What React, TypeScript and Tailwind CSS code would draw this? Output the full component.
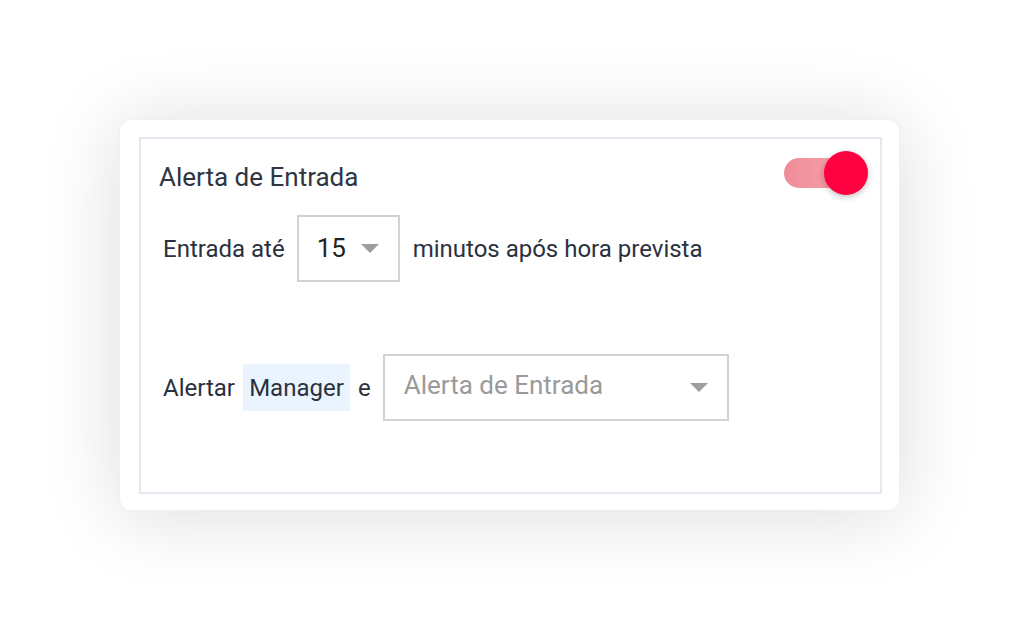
import React, { useState } from 'react';

const Caret: React.FC = () => (
    <svg width="18" height="9" viewBox="0 0 18 9" className="shrink-0">
        <path d="M0 0 L18 0 L9 9 Z" fill="#9e9e9e" />
    </svg>
);

const App: React.FC = () => {
    const [enabled, setEnabled] = useState(true);

    return (
        <div
            className="w-full h-[631px] bg-white pt-[119px] pl-[119px]"
            style={{ fontFamily: 'Roboto, "Noto Sans", sans-serif' }}
        >
            {/* Card */}
            <div className="w-[781px] h-[392px] bg-white rounded-[12px] border border-[#f0f0f0] shadow-[0_4px_80px_rgba(0,0,0,0.14)] pt-[17px] pl-[19px]">
                <div className="w-[743px] h-[357px] border-2 border-[#e4e9f0] pt-[12px] pr-[12px] flex flex-col">
                    {/* Header */}
                    <div className="flex items-start justify-between">
                        <h2 className="pl-[18px] mt-[13px] text-[26px] text-[#2f3643] leading-none">Alerta de Entrada</h2>
                        <button
                            onClick={() => setEnabled(!enabled)}
                            className="relative w-[84px] h-[44px] flex items-center"
                        >
                            <span className="w-[66px] h-[30px] rounded-full bg-gradient-to-r from-[#ee8c98] to-[#f8a3ab]"></span>
                            <span
                                className={`absolute top-0 w-[44px] h-[44px] rounded-full bg-[#ff0041] shadow-[0_2px_6px_rgba(0,0,0,0.25)] ${enabled ? 'right-0' : 'left-0'}`}
                            ></span>
                        </button>
                    </div>

                    {/* Row 1 */}
                    <div className="mt-[20px] flex items-center pl-[22px] text-[24px] text-[#2a313e]">
                        <span>Entrada até</span>
                        <div className="ml-[12px] w-[103px] h-[67px] border-2 border-[#d2d2d2] flex items-center pl-[18px] pr-[19px] justify-between">
                            <span className="text-[26px] text-[#222]">15</span>
                            <Caret />
                        </div>
                        <span className="ml-[13px]">minutos após hora prevista</span>
                    </div>

                    {/* Row 2 */}
                    <div className="mt-[72px] flex items-center pl-[22px] text-[24px] text-[#2a313e]">
                        <span>Alertar</span>
                        <span className="ml-[8px] h-[47px] w-[107px] flex items-center justify-center bg-[#eaf4ff]">Manager</span>
                        <span className="ml-[8px]">e</span>
                        <div className="ml-[12px] w-[346px] h-[67px] border-2 border-[#d2d2d2] flex items-center justify-between pl-[19px] pr-[19px]">
                            <span className="text-[26px] text-[#9a9a9a] pb-[4px]">Alerta de Entrada</span>
                            <Caret />
                        </div>
                    </div>
                </div>
            </div>
        </div>
    );
};

export default App;
